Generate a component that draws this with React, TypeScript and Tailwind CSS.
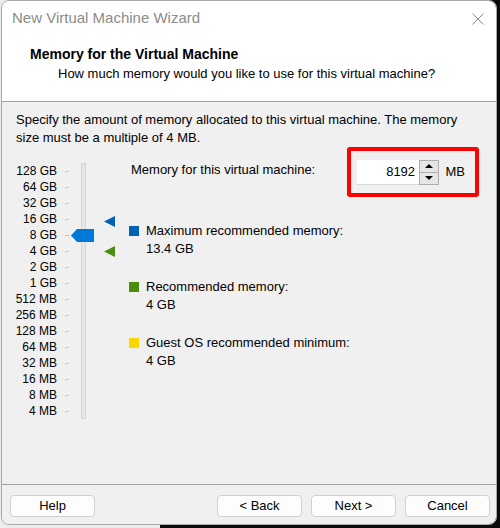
import type { ReactNode } from 'react';

const SCALE = [
  '128 GB', '64 GB', '32 GB', '16 GB', '8 GB', '4 GB', '2 GB', '1 GB',
  '512 MB', '256 MB', '128 MB', '64 MB', '32 MB', '16 MB', '8 MB', '4 MB',
];
const ROW_PX = 16;
const SELECTED = 4; // 8 GB

function WizardButton({ children }: { children: ReactNode }) {
  return (
    <button className="h-[22px] w-[85px] rounded-[4px] border border-[#d0d0d0] bg-[#fdfdfd] text-[13px] text-black">
      {children}
    </button>
  );
}

function Legend({ color, label, value }: { color: string; label: string; value: string }) {
  return (
    <div className="flex flex-col">
      <div className="flex h-[18px] items-center">
        <span className={`mr-[7px] h-[10px] w-[10px] ${color}`} />
        <span>{label}</span>
      </div>
      <div className="h-[18px] pl-[17px] leading-[18px]">{value}</div>
    </div>
  );
}

function MemorySlider() {
  return (
    <div className="flex pt-[16px] text-[12px]">
      {/* size labels */}
      <div className="flex w-[41px] flex-col items-end">
        {SCALE.map((s) => (
          <div key={s} className="h-[16px] whitespace-nowrap leading-[16px]">{s}</div>
        ))}
      </div>
      {/* tick marks */}
      <div className="ml-[8px] flex w-[4px] flex-col">
        {SCALE.map((s) => (
          <div key={s} className="flex h-[16px] items-center">
            <div className="h-px w-[4px] bg-[#c4c4c4]" />
          </div>
        ))}
      </div>
      {/* track + thumb */}
      <div className="relative ml-[12px] w-[5px]">
        <div className="h-[256px] w-[5px] border border-[#d6d6d6] bg-[#e7e7e7]" />
        <svg
          className="absolute left-[-10px]"
          style={{ top: SELECTED * ROW_PX + 2 }}
          width="23"
          height="13"
          viewBox="0 0 23 13"
        >
          <path d="M0 6.5 L6 0 H23 V13 H6 Z" fill="#0078d7" />
        </svg>
      </div>
      {/* recommendation markers */}
      <div className="relative ml-[18px] w-[11px]">
        <svg className="absolute left-0 top-[53px]" width="11" height="11" viewBox="0 0 11 11">
          <path d="M0 5.5 L11 0 V11 Z" fill="#0063b1" />
        </svg>
        <svg className="absolute left-0 top-[83px]" width="11" height="11" viewBox="0 0 11 11">
          <path d="M0 5.5 L11 0 V11 Z" fill="#4a8f12" />
        </svg>
      </div>
    </div>
  );
}

function Spinner() {
  return (
    <div className="flex h-[50px] w-[132px] items-center rounded-[3px] border-4 border-[#ff0000] pl-[6px] pr-[10px]">
      <div className="flex h-[25px] w-[64px] items-center justify-end border-b border-[#d8d8d8] bg-white pr-[4px]">
        8192
      </div>
      <div className="flex h-[25px] w-[20px] flex-col border border-[#adadad] bg-[#e6e6e6]">
        <div className="flex flex-1 items-center justify-center border-b border-[#adadad]">
          <svg width="8" height="4" viewBox="0 0 8 4"><path d="M4 0 L8 4 H0 Z" fill="#000" /></svg>
        </div>
        <div className="flex flex-1 items-center justify-center">
          <svg width="8" height="4" viewBox="0 0 8 4"><path d="M0 0 H8 L4 4 Z" fill="#000" /></svg>
        </div>
      </div>
      <span className="ml-[7px]">MB</span>
    </div>
  );
}

export default function App() {
  return (
    <div className="h-[528px] w-[500px] bg-[linear-gradient(to_right,#ececec_160px,#0c0c0c_160px)] font-['Liberation_Sans',Arial,sans-serif] text-[13px] text-black">
      <div className="ml-[1px] flex h-[525px] w-[496px] flex-col overflow-hidden rounded-[8px] border border-[#a8a8a8]">
        {/* title bar + header */}
        <div className="bg-white">
          <div className="flex h-[35px] items-center justify-between pl-[10px] pr-[12px]">
            <span className="text-[15px] text-[#8c8c8c]">New Virtual Machine Wizard</span>
            <svg width="12" height="12" viewBox="0 0 12 12">
              <path d="M0.5 0.5 L11.5 11.5 M11.5 0.5 L0.5 11.5" stroke="#8a8a8a" strokeWidth="1" />
            </svg>
          </div>
          <div className="border-b border-[#a0a0a0] pb-[18px] pl-[28px] pt-[9px]">
            <div className="text-[14px] font-bold leading-[19px]">Memory for the Virtual Machine</div>
            <div className="pl-[28px] leading-[19px]">How much memory would you like to use for this virtual machine?</div>
          </div>
        </div>

        {/* body */}
        <div className="flex-1 border-b border-[#a0a0a0] bg-[#f0f0f0] px-[14px] pt-[9px]">
          <p className="leading-[18px]">
            Specify the amount of memory allocated to this virtual machine. The memory
            <br />
            size must be a multiple of 4 MB.
          </p>
          <div className="flex">
            <MemorySlider />
            <div className="ml-[14px] flex flex-1 flex-col">
              <div className="flex items-center justify-between pl-[2px] pr-[3px]">
                <span className="-mt-[4px]">Memory for this virtual machine:</span>
                <Spinner />
              </div>
              <div className="mt-[25px] flex flex-col gap-[20px]">
                <Legend color="bg-[#0063b1]" label="Maximum recommended memory:" value="13.4 GB" />
                <Legend color="bg-[#4c8c0d]" label="Recommended memory:" value="4 GB" />
                <Legend color="bg-[#ffd500]" label="Guest OS recommended minimum:" value="4 GB" />
              </div>
            </div>
          </div>
        </div>

        {/* footer buttons */}
        <div className="flex h-[39px] items-start bg-[#f0f0f0] pl-[8px] pr-[6px] pt-[10px]">
          <WizardButton>Help</WizardButton>
          <div className="flex-1" />
          <div className="flex gap-[9px]">
            <WizardButton>&lt; Back</WizardButton>
            <WizardButton>Next &gt;</WizardButton>
            <WizardButton>Cancel</WizardButton>
          </div>
        </div>
      </div>
    </div>
  );
}
